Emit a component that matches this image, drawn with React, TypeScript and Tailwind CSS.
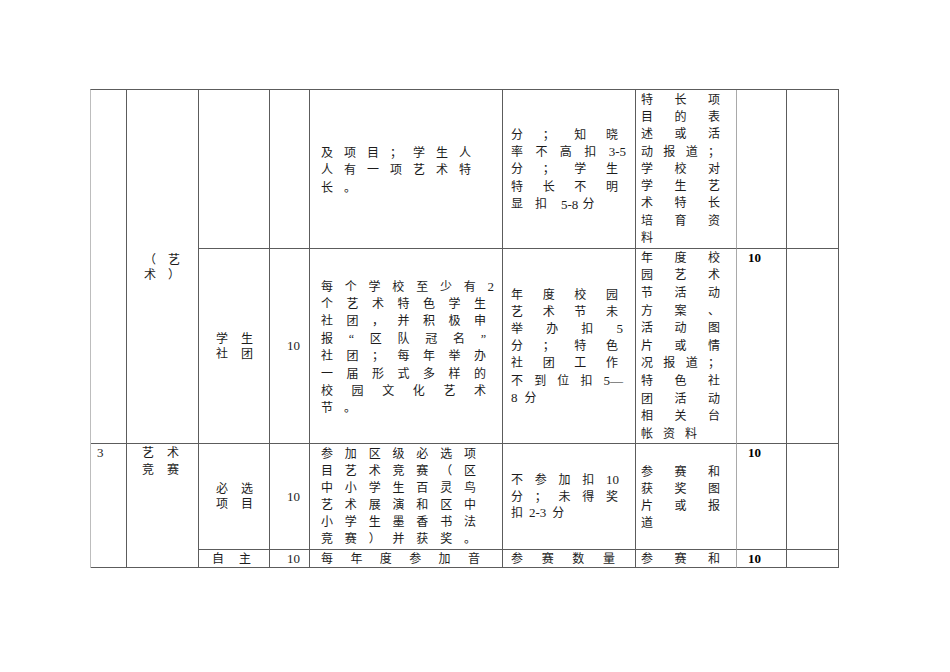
import React from 'react';

const sp = (s: string) => Array.from(s);

const J = ({ t, w, h }: { t: string[]; w: string; h: string }) => (
  <div className={`flex items-center justify-between ${w} ${h}`}>
    {t.map((c, i) => (
      <span key={i} className={/[0-9]/.test(c) ? 'whitespace-pre text-[13px]' : 'whitespace-pre'}>
        {c}
      </span>
    ))}
  </div>
);

const cell = 'border-r border-b border-[#5c5c5c] overflow-hidden';
const cellG = 'border-r border-b border-b-[#5c5c5c] border-r-[#a9a9a9] overflow-hidden';

export default function App() {
  return (
    <div className="w-[950px] h-[672px] bg-white pt-[89px] pl-[90px] text-[#1c1c1c] font-['Liberation_Serif','Noto_Sans_CJK_SC',serif] text-[12px]">
      <div className="grid w-max grid-cols-[36px_72px_71px_40px_193px_133px_101px_50px_52px] grid-rows-[159px_195px_106px_18px] border-t border-l border-t-[#5c5c5c] border-l-[#bdbdbd]">
        {/* Row 1 */}
        <div className={`${cell} row-span-2`} />
        <div className={`${cell} row-span-2 pl-[17px] pt-[162px]`}>
          <J t={['（', '艺']} w="w-[36px]" h="h-[15px]" />
          <J t={['术', '）']} w="w-[36px]" h="h-[15px]" />
        </div>
        <div className={cell} />
        <div className={cell} />
        <div className={`${cell} pl-[11px] pt-[54px]`}>
          <J t={sp('及项目；学生人')} w="w-[150px]" h="h-[17.5px]" />
          <J t={sp('人有一项艺术特')} w="w-[150px]" h="h-[17.5px]" />
          <div className="flex h-[17.5px] items-center gap-[11px]">
            <span>长</span>
            <span>。</span>
          </div>
        </div>
        <div className={`${cell} pl-[8px] pt-[36px]`}>
          <J t={sp('分；知晓')} w="w-[107px]" h="h-[17.4px]" />
          <J t={['率', '不', '高', '扣', '3-5']} w="w-[115px]" h="h-[17.4px]" />
          <J t={sp('分；学生')} w="w-[107px]" h="h-[17.4px]" />
          <J t={sp('特长不明')} w="w-[107px]" h="h-[17.4px]" />
          <div className="flex h-[17.4px] items-center">
            <span>显</span>
            <span className="ml-[12px]">扣</span>
            <span className="ml-[14px] text-[13px]">5-8</span>
            <span className="ml-[4px]">分</span>
          </div>
        </div>
        <div className={`${cellG} pl-[5px] pt-[1px]`}>
          {['特长项', '目的表', '述或活', '动报道；', '学校对', '学生艺', '术特长', '培育资'].map((l) => (
            <J key={l} t={sp(l)} w="w-[79px]" h="h-[17.3px]" />
          ))}
          <div className="flex h-[17.3px] items-center">
            <span>料</span>
          </div>
        </div>
        <div className={cell} />
        <div className={cell} />

        {/* Row 2 */}
        <div className={`${cell} flex flex-col justify-center pl-[17px]`}>
          <J t={sp('学生')} w="w-[37px]" h="h-[15px]" />
          <J t={sp('社团')} w="w-[37px]" h="h-[15px]" />
        </div>
        <div className={`${cell} flex items-center pl-[17px] text-[13px]`}>10</div>
        <div className={`${cell} pl-[11px] pt-[29px]`}>
          <J t={sp('每个学校至少有2')} w="w-[173px]" h="h-[17.4px]" />
          {['个艺术特色学生', '社团，并积极申', '报“区队冠名”', '社团；每年举办', '一届形式多样的', '校园文化艺术'].map((l) => (
            <J key={l} t={sp(l)} w="w-[165px]" h="h-[17.4px]" />
          ))}
          <div className="flex h-[17.4px] items-center gap-[11px]">
            <span>节</span>
            <span>。</span>
          </div>
        </div>
        <div className={`${cell} pl-[8px] pt-[37px]`}>
          <J t={sp('年度校园')} w="w-[107px]" h="h-[17.2px]" />
          <J t={sp('艺术节未')} w="w-[107px]" h="h-[17.2px]" />
          <J t={['举', '办', '扣', '5']} w="w-[112px]" h="h-[17.2px]" />
          <J t={sp('分；特色')} w="w-[107px]" h="h-[17.2px]" />
          <J t={sp('社团工作')} w="w-[107px]" h="h-[17.2px]" />
          <J t={['不', '到', '位', '扣', '5—']} w="w-[112px]" h="h-[17.2px]" />
          <div className="flex h-[17.2px] items-center">
            <span className="text-[13px]">8</span>
            <span className="ml-[7px]">分</span>
          </div>
        </div>
        <div className={`${cellG} pl-[5px]`}>
          {['年度校', '园艺术', '节活动', '方案、', '活动图', '片或情', '况报道；', '特色社', '团活动', '相关台'].map((l) => (
            <J key={l} t={sp(l)} w="w-[79px]" h="h-[17.6px]" />
          ))}
          <div className="flex h-[17.6px] items-center gap-[10px]">
            <span>帐</span>
            <span>资</span>
            <span>料</span>
          </div>
        </div>
        <div className={`${cell} pl-[11px] font-bold text-[13px] text-black leading-[18px]`}>10</div>
        <div className={cell} />

        {/* Row 3 */}
        <div className={`${cell} row-span-2 pl-[6px] pt-[1px] text-[13px] leading-[16px]`}>3</div>
        <div className={`${cell} row-span-2 pl-[15px] pt-[1px]`}>
          <J t={sp('艺术')} w="w-[37px]" h="h-[16.7px]" />
          <J t={sp('竞赛')} w="w-[37px]" h="h-[16.7px]" />
        </div>
        <div className={`${cell} flex flex-col justify-center pl-[17px]`}>
          <J t={sp('必选')} w="w-[37px]" h="h-[15px]" />
          <J t={sp('项目')} w="w-[37px]" h="h-[15px]" />
        </div>
        <div className={`${cell} flex items-center pl-[17px] text-[13px]`}>10</div>
        <div className={`${cell} pl-[11px] pt-[1px]`}>
          {['参加区级必选项', '目艺术竞赛（区', '中小学生百灵鸟', '艺术展演和区中', '小学生墨香书法', '竞赛）并获奖。'].map((l) => (
            <J key={l} t={sp(l)} w="w-[155px]" h="h-[17.1px]" />
          ))}
        </div>
        <div className={`${cell} flex flex-col justify-center pl-[8px]`}>
          <J t={['不', '参', '加', '扣', '10']} w="w-[108px]" h="h-[16.5px]" />
          <J t={sp('分；未得奖')} w="w-[107px]" h="h-[16.5px]" />
          <div className="flex h-[16.5px] items-center">
            <span>扣</span>
            <span className="ml-[6px] text-[13px]">2-3</span>
            <span className="ml-[6px]">分</span>
          </div>
        </div>
        <div className={`${cellG} pl-[5px] pt-[19px]`}>
          {['参赛和', '获奖图', '片或报'].map((l) => (
            <J key={l} t={sp(l)} w="w-[79px]" h="h-[17.2px]" />
          ))}
          <div className="flex h-[17.2px] items-center">
            <span>道</span>
          </div>
        </div>
        <div className={`${cell} pl-[11px] font-bold text-[13px] text-black leading-[18px]`}>10</div>
        <div className={cell} />

        {/* Row 4 */}
        <div className={`${cell} flex items-center pl-[13px]`}>
          <J t={sp('自主')} w="w-[39px]" h="h-[17px]" />
        </div>
        <div className={`${cell} flex items-center pl-[17px] text-[13px]`}>10</div>
        <div className={`${cell} flex items-center pl-[11px]`}>
          <J t={sp('每年度参加音')} w="w-[159px]" h="h-[17px]" />
        </div>
        <div className={`${cell} flex items-center pl-[8px]`}>
          <J t={sp('参赛数量')} w="w-[104px]" h="h-[17px]" />
        </div>
        <div className={`${cellG} flex items-center pl-[5px]`}>
          <J t={sp('参赛和')} w="w-[79px]" h="h-[17px]" />
        </div>
        <div className={`${cell} flex items-center pl-[11px] font-bold text-[13px] text-black`}>10</div>
        <div className={cell} />
      </div>
    </div>
  );
}
